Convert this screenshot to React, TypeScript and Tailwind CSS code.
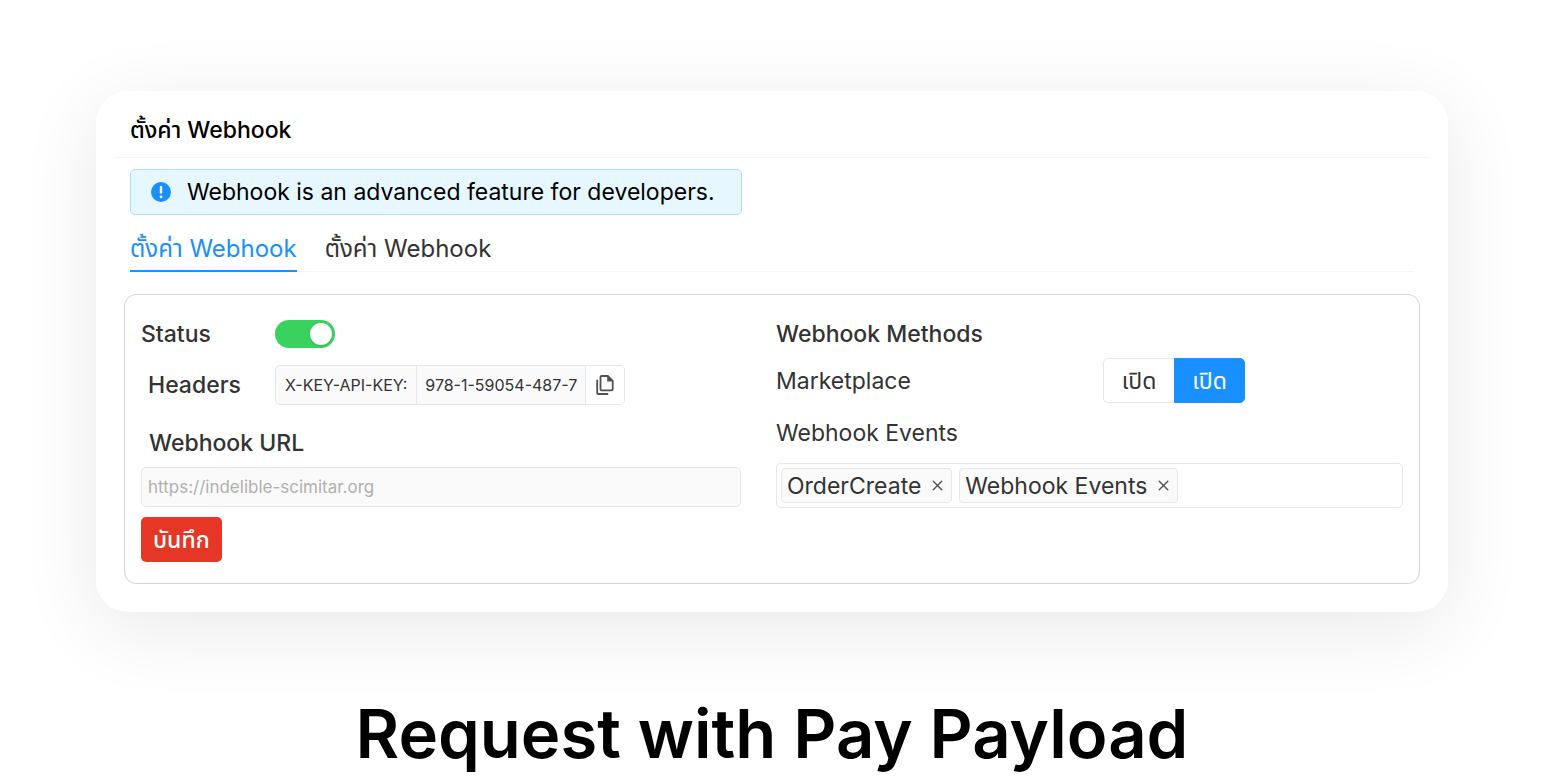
import { useState } from "react";
import { X } from "lucide-react";

const TABS = ["settings", "logs"];

interface TagProps {
  label: string;
  onRemove: () => void;
}

function Tag({ label, onRemove }: TagProps) {
  return (
    <li className="flex h-[35px] items-center gap-2 rounded-sm border border-gray-200 bg-neutral-50 px-[5px]">
      {label}
      <button type="button" aria-label={`Remove ${label}`} onClick={onRemove} className="text-neutral-600">
        <X className="size-[17px]" strokeWidth={2} />
      </button>
    </li>
  );
}

function AlertIcon() {
  return (
    <svg viewBox="0 0 20 20" className="size-5 shrink-0" fill="none">
      <circle cx="10" cy="10" r="10" fill="#1890ff" />
      <path d="M10 5v5.4" stroke="#fff" strokeWidth="2.4" strokeLinecap="round" />
      <circle cx="10" cy="14.8" r="1.4" fill="#fff" />
    </svg>
  );
}

function CopyIcon() {
  return (
    <svg viewBox="0 0 18 20" className="h-5 w-[18px]" fill="none" stroke="currentColor" strokeWidth="1.8">
      <path d="M5.6 1h6.2l4.9 4.9v8.3a1.1 1.1 0 0 1-1.1 1.1h-10a1.1 1.1 0 0 1-1.1-1.1v-12A1.1 1.1 0 0 1 5.6 1Z" />
      <path d="M11.2.6v5.8h5.8Z" fill="currentColor" stroke="none" />
      <path d="M1.2 4.8v13.1a1.1 1.1 0 0 0 1.1 1.1h9.9" />
    </svg>
  );
}

function StatusSwitch() {
  const [enabled, setEnabled] = useState(true);

  return (
    <input
      id="status"
      type="checkbox"
      role="switch"
      checked={enabled}
      onChange={() => setEnabled(!enabled)}
      className="h-7 w-[60px] appearance-none rounded-full bg-neutral-300 p-[3px] before:block before:size-[22px] before:rounded-full before:bg-white before:shadow checked:bg-[#3ad25f] checked:before:ml-auto"
    />
  );
}

export default function App() {
  const [activeTab, setActiveTab] = useState("settings");
  const [marketplace, setMarketplace] = useState(true);
  const [events, setEvents] = useState(["OrderCreate", "Webhook Events"]);

  return (
    <main className="bg-white px-24 pt-[91px] font-['Inter','Noto_Sans_Thai',sans-serif] text-[23px] leading-8 text-[#333]">
      <section className="rounded-[32px] bg-white px-[18px] pb-7 shadow-[0_16px_80px_rgba(0,0,0,0.09)]">
        <header className="flex h-[67px] items-center border-b border-neutral-100 px-4 pt-3">
          <h1 className="font-medium text-black">ตั้งค่า Webhook</h1>
        </header>

        <div className="px-4">
          <p className="mt-[11px] flex h-[46px] w-fit items-center gap-4 rounded-[5px] border border-[#b5dff0] bg-[#e6f7ff] pr-[26px] pl-5 text-black">
            <AlertIcon />
            Webhook is an advanced feature for developers.
          </p>

          <div role="tablist" className="flex h-[57px] items-stretch gap-7 border-b border-neutral-100 text-2xl">
            {TABS.map((tab) => (
              <button
                key={tab}
                type="button"
                role="tab"
                aria-selected={activeTab === tab}
                onClick={() => setActiveTab(tab)}
                className="-mb-px border-b-2 border-transparent pt-3 aria-selected:border-[#1890ff] aria-selected:text-[#1890ff]"
              >
                ตั้งค่า Webhook
              </button>
            ))}
          </div>
        </div>

        <form
          onSubmit={(e) => e.preventDefault()}
          className="mx-[10px] mt-[22px] grid grid-cols-[600fr_627fr] gap-[35px] rounded-xl border border-neutral-300 px-4 pt-[25px] pb-[21px]"
        >
          <div>
            <div className="flex h-7 items-center">
              <label htmlFor="status" className="w-[134px] font-medium">Status</label>
              <StatusSwitch />
            </div>

            <div className="mt-[17px] flex items-center">
              <span className="w-[134px] pl-[7px] font-medium">Headers</span>
              <div className="flex h-10 items-stretch divide-x divide-gray-200 overflow-hidden rounded-[5px] border border-gray-200 bg-neutral-50 text-base">
                <span className="flex items-center px-[9px]">X-KEY-API-KEY:</span>
                <span className="flex items-center px-2">978-1-59054-487-7</span>
                <button type="button" aria-label="Copy key" className="flex w-[38px] items-center justify-center bg-white text-neutral-600">
                  <CopyIcon />
                </button>
              </div>
            </div>

            <label htmlFor="webhook-url" className="mt-[22px] block pl-2 font-medium">Webhook URL</label>
            <input
              id="webhook-url"
              type="url"
              placeholder="https://indelible-scimitar.org"
              className="mt-2 block h-10 w-full rounded-[5px] border border-gray-200 bg-neutral-50 px-[6px] text-[17px] placeholder:text-[#b0b0b0]"
            />
            <button type="submit" className="mt-[10px] h-[45px] rounded-[5px] bg-[#e63625] px-3 font-medium text-white">
              บันทึก
            </button>
          </div>

          <div>
            <h2 className="flex h-7 items-center font-medium">Webhook Methods</h2>

            <div className="mt-[10px] flex items-center">
              <span className="w-[327px]">Marketplace</span>
              <div className="flex h-[45px]">
                <button
                  type="button"
                  onClick={() => setMarketplace(false)}
                  aria-pressed={!marketplace}
                  className="w-[71px] rounded-l-[5px] border border-r-0 border-gray-200 aria-pressed:bg-[#1890ff] aria-pressed:text-white"
                >
                  เปิด
                </button>
                <button
                  type="button"
                  onClick={() => setMarketplace(true)}
                  aria-pressed={marketplace}
                  className="w-[71px] rounded-r-[5px] border border-gray-200 aria-pressed:border-[#1890ff] aria-pressed:bg-[#1890ff] aria-pressed:text-white"
                >
                  เปิด
                </button>
              </div>
            </div>

            <h3 className="mt-[14px]">Webhook Events</h3>
            <ul className="mt-[14px] flex h-[45px] items-center gap-[7px] rounded-[5px] border border-gray-200 px-1">
              {events.map((event) => (
                <Tag key={event} label={event} onRemove={() => setEvents(events.filter((e) => e !== event))} />
              ))}
            </ul>
          </div>
        </form>
      </section>

      <h2 className="mt-[82px] text-center text-[67px] leading-[80px] font-semibold text-black">
        Request with Pay Payload
      </h2>
    </main>
  );
}
